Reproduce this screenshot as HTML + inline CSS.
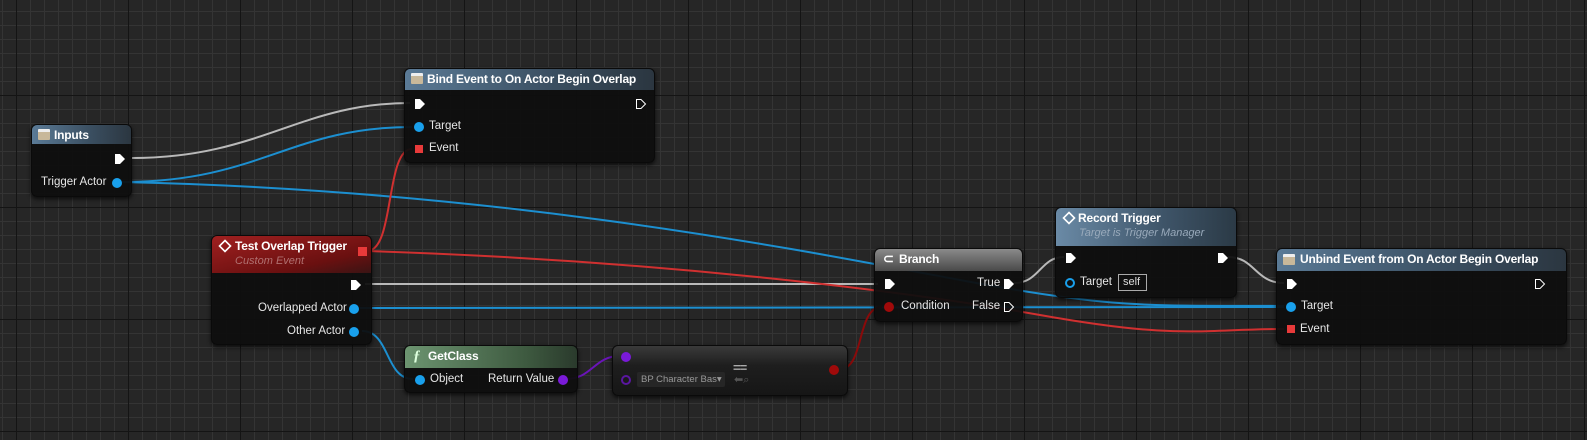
<!DOCTYPE html>
<html><head><meta charset="utf-8"><style>
*{margin:0;padding:0;box-sizing:border-box}
body{width:1587px;height:440px;overflow:hidden;position:relative;font-family:"Liberation Sans",sans-serif;font-size:12px;color:#ddd;
background-color:#262626;
background-image:
linear-gradient(to right,#141414 0 1px,transparent 1px),
linear-gradient(to bottom,#141414 0 1px,transparent 1px),
linear-gradient(to right,#343434 0 1px,transparent 1px),
linear-gradient(to bottom,#343434 0 1px,transparent 1px);
background-size:112px 112px,112px 112px,14px 14px,14px 14px;
background-position:16px 95px,16px 95px,2px 11px,2px 11px;}
.n{position:absolute;background:rgba(14,14,14,.94);border-radius:6px;box-shadow:0 2px 4px rgba(0,0,0,.7);border:1px solid #0a0a0a}
.h{position:absolute;left:0;right:0;top:0;border-radius:5px 5px 0 0;padding:3px 0 0 22px;font-weight:bold;color:#fff;font-size:12px;letter-spacing:-.2px}
.b{background:linear-gradient(to right,#5a7a96,#3a4e60 60%,#2b3640)}
.t{position:absolute;font-size:11.5px;color:#e6e6e6;white-space:nowrap}
.sub{position:absolute;font-style:italic;font-size:11px;color:#b07070;white-space:nowrap}
.ico{position:absolute;left:6px;top:4px;width:12px;height:11px;background:linear-gradient(#eee 0 3px,#c8b89a 3px);border-radius:1px}
</style></head><body>
<svg width="1587" height="440" style="position:absolute;left:0;top:0" fill="none" stroke-width="2">
<path d="M132 158 C260 158 300 103 410 103" stroke="#b9b9b9"/>
<path d="M122 182 C260 182 290 127 412 127" stroke="#1c8fd0"/>
<path d="M122 182 C500 190 800 250 960 280 S1150 305 1284 306" stroke="#1c8fd0"/>
<path d="M360 308 L1284 307" stroke="#1c8fd0"/>
<path d="M362 331 C390 331 385 379 413 379" stroke="#1c8fd0"/>
<path d="M365 284 L878 284" stroke="#b9b9b9"/>
<path d="M1014 283 C1040 283 1040 257 1064 257" stroke="#b9b9b9"/>
<path d="M1228 257 C1255 257 1255 283 1284 283" stroke="#b9b9b9"/>
<path d="M367 251 C395 251 385 149 412 149" stroke="#d03030"/>
<path d="M367 251 C650 260 900 290 1040 315 S1200 329 1284 329" stroke="#d03030"/>
<path d="M840 369 C865 369 856 307 882 307" stroke="#8a0a0a"/>
<path d="M566 379 C592 379 594 356 620 356" stroke="#6a14b8"/>
</svg>

<!-- Inputs -->
<div class="n" style="left:31px;top:124px;width:101px;height:73px">
<div class="h b" style="height:19px">Inputs</div><div class="ico"></div>
<svg style="position:absolute;left:82px;top:28px" width="12" height="12"><path d="M1 1h5l5 5-5 5H1z" fill="#fff"/></svg>
<div class="t" style="left:9px;top:51px">Trigger Actor</div>
<div style="position:absolute;left:80px;top:53px;width:10px;height:10px;border-radius:50%;background:#19a0ec"></div>
</div>

<!-- Bind -->
<div class="n" style="left:404px;top:68px;width:251px;height:95px">
<div class="h b" style="height:21px">Bind Event to On Actor Begin Overlap</div><div class="ico"></div>
<svg style="position:absolute;left:9px;top:29px" width="12" height="12"><path d="M1 1h5l5 5-5 5H1z" fill="#fff"/></svg>
<svg style="position:absolute;left:230px;top:29px" width="12" height="12"><path d="M1.5 1.5h4.5l4.5 4.5-4.5 4.5H1.5z" stroke="#fff" fill="none"/></svg>
<div style="position:absolute;left:9px;top:53px;width:10px;height:10px;border-radius:50%;background:#19a0ec"></div>
<div class="t" style="left:24px;top:51px">Target</div>
<div style="position:absolute;left:10px;top:76px;width:8px;height:8px;background:#e83a3a"></div>
<div class="t" style="left:24px;top:73px">Event</div>
</div>

<!-- Test Overlap Trigger -->
<div class="n" style="left:211px;top:235px;width:161px;height:110px">
<div class="h" style="height:37px;background:linear-gradient(to bottom right,#a02020,#6a1010 70%,#3a1414);padding-left:23px">Test Overlap Trigger</div>
<svg style="position:absolute;left:6px;top:3px" width="14" height="14"><path d="M7 1.5L12.5 7 7 12.5 1.5 7z" stroke="#fff" stroke-width="1.6" fill="none"/></svg>
<div class="sub" style="left:23px;top:19px">Custom Event</div>
<div style="position:absolute;left:146px;top:11px;width:9px;height:9px;background:#e83a3a"></div>
<svg style="position:absolute;left:138px;top:43px" width="12" height="12"><path d="M1 1h5l5 5-5 5H1z" fill="#fff"/></svg>
<div class="t" style="left:46px;top:66px">Overlapped Actor</div>
<div style="position:absolute;left:137px;top:68px;width:10px;height:10px;border-radius:50%;background:#19a0ec"></div>
<div class="t" style="left:75px;top:89px">Other Actor</div>
<div style="position:absolute;left:137px;top:91px;width:10px;height:10px;border-radius:50%;background:#19a0ec"></div>
</div>

<!-- GetClass -->
<div class="n" style="left:404px;top:345px;width:174px;height:48px">
<div class="h" style="height:22px;background:linear-gradient(to right,#6c9470,#3e5a40 70%,#2a3a2c);padding-left:23px">GetClass</div>
<div style="position:absolute;left:8px;top:2px;color:#dfd;font-style:italic;font-weight:bold;font-family:'Liberation Serif',serif;font-size:15px">ƒ</div>
<div style="position:absolute;left:10px;top:29px;width:10px;height:10px;border-radius:50%;background:#19a0ec"></div>
<div class="t" style="left:25px;top:27px">Object</div>
<div class="t" style="left:83px;top:27px">Return Value</div>
<div style="position:absolute;left:153px;top:29px;width:10px;height:10px;border-radius:50%;background:#7a1ad8"></div>
</div>

<!-- Equal -->
<div class="n" style="left:612px;top:345px;width:236px;height:51px;background:linear-gradient(#3a3a3a,#1e1e1e 40%,#161616)">
<div style="position:absolute;left:8px;top:6px;width:10px;height:10px;border-radius:50%;background:#7a1ad8"></div>
<div style="position:absolute;left:8px;top:29px;width:10px;height:10px;border-radius:50%;border:2px solid #5a16a0"></div>
<div style="position:absolute;left:24px;top:26px;width:88px;height:15px;background:#262626;border-radius:2px;font-size:9.5px;color:#999;padding:2px 0 0 4px;white-space:nowrap;overflow:hidden">BP Character Bas▾</div>
<div style="position:absolute;left:120px;top:14px;color:#aaa;font-size:13px;font-weight:bold;letter-spacing:-1px">==</div>
<div style="position:absolute;left:121px;top:27px;color:#555;font-size:11px">⬅⌕</div>
<div style="position:absolute;left:216px;top:19px;width:10px;height:10px;border-radius:50%;background:#a00a0a"></div>
</div>

<!-- Branch -->
<div class="n" style="left:874px;top:248px;width:149px;height:74px">
<div class="h" style="height:22px;background:linear-gradient(#8a8a8a,#4a4a4a);padding-left:24px">Branch</div>
<div style="position:absolute;left:8px;top:2px;color:#fff;font-weight:bold;font-size:13px">⊂</div>
<svg style="position:absolute;left:9px;top:29px" width="12" height="12"><path d="M1 1h5l5 5-5 5H1z" fill="#fff"/></svg>
<div class="t" style="left:102px;top:28px">True</div>
<svg style="position:absolute;left:128px;top:29px" width="12" height="12"><path d="M1 1h5l5 5-5 5H1z" fill="#fff"/></svg>
<div style="position:absolute;left:9px;top:53px;width:10px;height:10px;border-radius:50%;background:#a00a0a"></div>
<div class="t" style="left:26px;top:51px">Condition</div>
<div class="t" style="left:97px;top:51px">False</div>
<svg style="position:absolute;left:128px;top:52px" width="12" height="12"><path d="M1.5 1.5h4.5l4.5 4.5-4.5 4.5H1.5z" stroke="#fff" fill="none"/></svg>
</div>

<!-- Record Trigger -->
<div class="n" style="left:1055px;top:207px;width:182px;height:91px">
<div class="h b" style="height:38px;padding-left:22px;background:linear-gradient(to right,#6a8aa6,#3e5468 60%,#2b3a46)">Record Trigger</div>
<svg style="position:absolute;left:6px;top:3px" width="14" height="14"><path d="M7 1.5L12.5 7 7 12.5 1.5 7z" stroke="#fff" stroke-width="1.6" fill="none"/></svg>
<div class="sub" style="left:23px;top:19px;color:#9ab"> Target is Trigger Manager</div>
<svg style="position:absolute;left:9px;top:44px" width="12" height="12"><path d="M1 1h5l5 5-5 5H1z" fill="#fff"/></svg>
<svg style="position:absolute;left:161px;top:44px" width="12" height="12"><path d="M1 1h5l5 5-5 5H1z" fill="#fff"/></svg>
<div style="position:absolute;left:9px;top:70px;width:10px;height:10px;border-radius:50%;border:2px solid #19a0ec"></div>
<div class="t" style="left:24px;top:68px">Target</div>
<div style="position:absolute;left:62px;top:66px;width:29px;height:17px;border:1px solid #aaa;font-size:11px;color:#ddd;padding:1px 0 0 4px">self</div>
</div>

<!-- Unbind -->
<div class="n" style="left:1276px;top:248px;width:291px;height:97px">
<div class="h b" style="height:22px;padding-left:23px">Unbind Event from On Actor Begin Overlap</div><div class="ico" style="top:5px"></div>
<svg style="position:absolute;left:9px;top:29px" width="12" height="12"><path d="M1 1h5l5 5-5 5H1z" fill="#fff"/></svg>
<svg style="position:absolute;left:257px;top:29px" width="12" height="12"><path d="M1.5 1.5h4.5l4.5 4.5-4.5 4.5H1.5z" stroke="#fff" fill="none"/></svg>
<div style="position:absolute;left:9px;top:53px;width:10px;height:10px;border-radius:50%;background:#19a0ec"></div>
<div class="t" style="left:24px;top:51px">Target</div>
<div style="position:absolute;left:10px;top:76px;width:8px;height:8px;background:#e83a3a"></div>
<div class="t" style="left:23px;top:74px">Event</div>
</div>
</body></html>
